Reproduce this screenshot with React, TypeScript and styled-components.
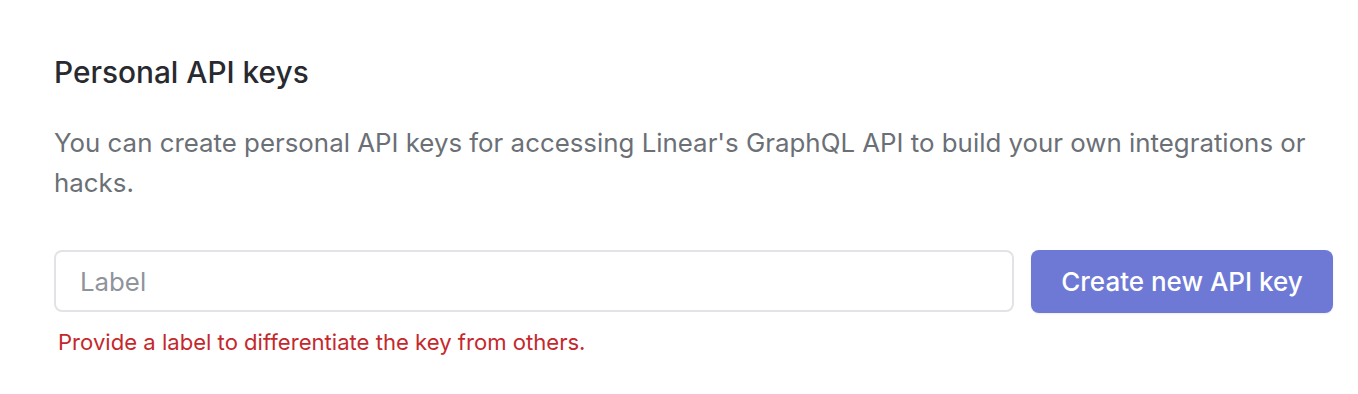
import React from "react";
import styled, { createGlobalStyle } from "styled-components";

const Global = createGlobalStyle`
  html, body { margin: 0; padding: 0; background: #ffffff; }
  body { font-family: Inter, "Noto Sans", sans-serif; -webkit-font-smoothing: antialiased; }
  * { box-sizing: border-box; }
`;

const Section = styled.section`
  padding: 52px 25px 0 54px;
  max-width: 1358px;
  display: flex;
  flex-direction: column;
`;

const Title = styled.h2`
  margin: 0;
  font-size: 29.8px;
  font-weight: 500;
  line-height: 40px;
  color: #282a30;
`;

const Description = styled.p`
  margin: 31px 0 0 0;
  font-size: 25.85px;
  font-weight: 400;
  line-height: 40px;
  color: #6b6f76;
  max-width: 1280px;
`;

const FormRow = styled.div`
  display: flex;
  gap: 17px;
  margin-top: 47px;
  max-width: 1280px;
`;

const Field = styled.div`
  flex: 1;
  display: flex;
  flex-direction: column;
`;

const Input = styled.input`
  height: 62px;
  width: 100%;
  border: 2px solid #e2e3e6;
  border-radius: 8px;
  padding: 0 24px;
  font-family: inherit;
  font-size: 25.8px;
  color: #282a30;
  outline: none;
  &::placeholder { color: #8f939b; }
`;

const Error = styled.div`
  margin-top: 17px;
  padding-left: 4px;
  font-size: 22.1px;
  line-height: 26px;
  color: #c5282c;
`;

const Button = styled.button`
  height: 63px;
  width: 302px;
  border: none;
  border-radius: 8px;
  background: #6e79d6;
  color: #ffffff;
  font-family: inherit;
  font-size: 26px;
  font-weight: 500;
  cursor: pointer;
  box-shadow: 0 1px 2px rgba(0,0,0,0.08);
`;

export default function App() {
  return (
    <>
      <Global />
      <Section>
        <Title>Personal API keys</Title>
        <Description>
          You can create personal API keys for accessing Linear's GraphQL API to build your own integrations or hacks.
        </Description>
        <FormRow>
          <Field>
            <Input placeholder="Label" />
            <Error>Provide a label to differentiate the key from others.</Error>
          </Field>
          <Button>Create new API key</Button>
        </FormRow>
      </Section>
    </>
  );
}
